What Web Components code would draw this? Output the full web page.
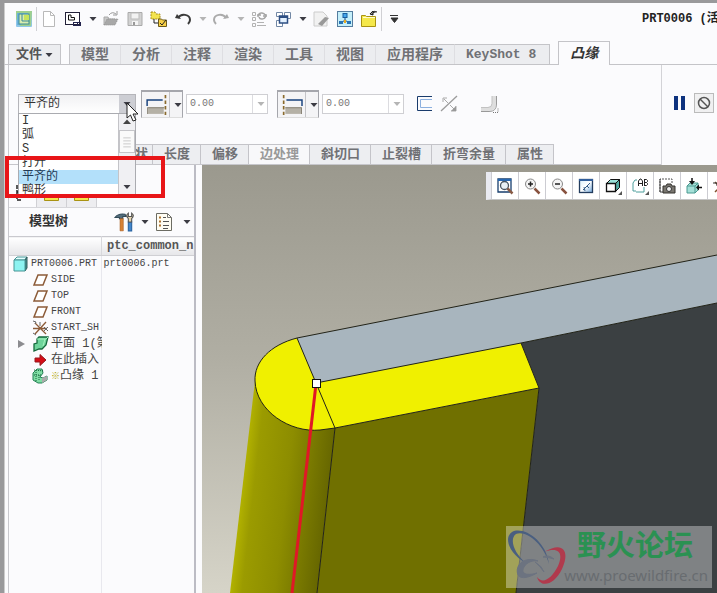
<!DOCTYPE html>
<html lang="zh-CN">
<head>
<meta charset="utf-8">
<title>PRT0006</title>
<style>
html, body { margin: 0; height: 100%; }
body { font-family: "Liberation Mono", "Noto Sans CJK SC", monospace; font-size: 12px; color: #444; overflow: hidden; }
</style>
</head>
<body>
<cad-window></cad-window>
<script>
const ICONS = {
  app: '<rect x="0" y="0" width="16" height="16" rx="1" fill="#8fc7ea"/><path d="M0 8V0h16l-1 15H4z" fill="#9ed08f"/><path d="M1 2h11v2H5v10H1z" fill="#6fb2dc"/><rect x="3" y="3" width="10" height="10" fill="#d9edb0" stroke="#3d8b96"/><path d="M6 3v7h7" fill="none" stroke="#3d8b96"/><rect x="8" y="4" width="5" height="5" fill="#c6e45a"/>',
  doc: '<path d="M2.500.5h7l4 4v11h-11z" fill="#fff" stroke="#b9b9b9"/><path d="M9.500.5v4h4" fill="none" stroke="#b9b9b9"/>',
  win: '<rect x=".5" y="1.500" width="14" height="12" fill="#fff" stroke="#222038"/><path d="M3.500 4v5h6v-2.500H6V4z" fill="#fff" stroke="#111"/><path d="M8 11.500h8M8 14.500h8M8.500 11v4M15.500 11v4M12.500 11v4" stroke="#23234d"/>',
  open: '<path d="M1 14V6h4l1 2h6v2" fill="#c9c9c9" stroke="#aaa"/><path d="M1 14l3-6h11l-3 6z" fill="#a8a8a8" stroke="#949494" stroke-dasharray="1 1"/><path d="M6 4q3-4 7-1M14 0v4h-4" fill="none" stroke="#999"/>',
  save: '<path d="M1 1.500h14v13H1z" fill="#d2d2d2" stroke="#aaa"/><rect x="4" y="2" width="8" height="6" fill="#f2f2f2" stroke="#bbb"/><rect x="5" y="10" width="6" height="4" fill="#f4f4f4"/><rect x="6" y="11" width="2" height="3" fill="#999"/>',
  tree: '<path d="M0 1h4l1 2h4v5H0z" fill="#f3e44f" stroke="#a78c16" stroke-dasharray="2 1"/><path d="M3 8v4h4" stroke="#222" fill="none"/><path d="M7.500 8h3l1 1h4v6.500h-8z" fill="#f7cf46" stroke="#6b5a1d"/><path d="M9 12l2 2 4-5" fill="none" stroke="#222"/>',
  undo: '<path d="M0 7l2-4 4 5z" fill="#3b3b3b"/><path d="M3 7c3-5 12-4 12 2 0 2-1 3-2 4" fill="none" stroke="#3b3b3b" stroke-width="2"/>',
  redo: '<path d="M16 7l-2-4-4 5z" fill="#ababab"/><path d="M13 7C10 2 1 3 1 9c0 2 1 3 2 4" fill="none" stroke="#ababab" stroke-width="2"/>',
  regen: '<path d="M1.500 1.500h3v3h-3zM1.500 6.500h3v3h-3zM1.500 12.500h3v3h-3zM6 14.500h9M6 11.500h7" fill="none" stroke="#b2b2b2"/><path d="M7 6c0-5 6-5 7-2M15 3c0 6-6 6-7 3M12 5h4M6 4h4" fill="none" stroke="#a5a5a5" stroke-width="1.500"/>',
  windows: '<path d="M1.500 1.500h6v4h-6zM9.500 1.500h6v6h-6zM1.500 9.500h6v6h-6z" fill="#fff" stroke="#7288a5"/><rect x="4.500" y="5" width="8" height="7" fill="#e3f1ff" stroke="#2d4e83" stroke-width="1.500"/><path d="M4 6h9" stroke="#2d4e83" stroke-width="2"/>',
  erase: '<path d="M1 1h9l4 4v10H1z" fill="#f1f1f1" stroke="#ccc"/><path d="M5 13l7-7 4 1-7 8z" fill="#999"/>',
  model: '<rect x=".5" y=".5" width="15" height="15" fill="#c5effa" stroke="#557d9f"/><rect x="6" y="2.500" width="4" height="4" fill="#45a7ea" stroke="#165d9f"/><path d="M8 7v3M4 12l4-3 4 3" stroke="#1e4d85" fill="none"/><rect x="2" y="10" width="4" height="3" fill="#2974b4"/><rect x="10" y="10" width="4" height="3" fill="#2974b4"/><rect x="7" y="9" width="2" height="3" fill="#e6aa23"/>',
  folder: '<path d="M.5 15.500V4.500h4l1 1h9v10z" fill="#f5e84b" stroke="#a99212"/><path d="M2 6.500h12" stroke="#fffbd0"/><path d="M9 3c2-3 5-3 7-2M9 3l3 1V0z" fill="#222" stroke="#222"/>',
  down: '<path d="M4.500 6h7L8 10z" fill="#3c3c44"/>',
  downlight: '<path d="M4.500 6h7L8 10z" fill="#b5b5b5"/>',
  up: '<path d="M4 10h8L8 5.500z" fill="#444"/>',
  custom: '<path d="M4 4.500h8M5 7h7l-3.500 4.500z" stroke="#333" fill="#333"/>',
  left: '<path d="M1 10V4.500h14" fill="none" stroke="#16407c" stroke-width="1.300"/><path d="M2 11h14v6H2z" fill="#b5b1a6"/><path d="M1.500 17v-5.500h15" fill="none" stroke="#8a8477"/><path d="M17.500 0v18" stroke="#8a6a2c" stroke-width="1.500" stroke-dasharray="3 2"/>',
  right: '<path d="M18 10V4.500H4" fill="none" stroke="#16407c" stroke-width="1.300"/><path d="M3 11h14v6H3z" fill="#b5b1a6"/><path d="M17.500 17v-5.500H3" fill="none" stroke="#8a8477"/><path d="M1.500 0v18" stroke="#8a6a2c" stroke-width="1.500" stroke-dasharray="3 2"/>',
  cbox: '<path d="M15 .5H.5v14H15" fill="none" stroke="#193b6c"/><path d="M15 3.500H3.500v8H15" fill="none" stroke="#8cb0df"/>',
  flip: '<path d="M0 15L16 0" stroke="#9b9b9b" stroke-width="1.300"/><path d="M2 6V2h4M3 3l4 4M15 10v5h-5M9 9l5 5" stroke="#aaa" fill="none"/><path d="M15 10v5h-5z" fill="#999"/>',
  bend: '<path d="M0 13h7q6 0 6-6V0" stroke="#dedede" stroke-width="4" fill="none"/><path d="M0 15.500h8q7.500 0 7.500-7.500V0" fill="none" stroke="#999"/><path d="M0 11.500h7q4 0 4-4V0" fill="none" stroke="#c2c2c2"/><path d="M12 16.500h5v-5" fill="none" stroke="#777" stroke-dasharray="1 1"/>',
  pause: '<path d="M2 1h4v14H2zM9 1h4v14H9z" fill="#0d327e"/>',
  stop: '<circle cx="8" cy="8" r="5.500" fill="none" stroke="#555" stroke-width="1.500"/><path d="M4 4l8 8" stroke="#555" stroke-width="1.500"/>',
  zoomfit: '<path d="M1 1h13v13H1z" fill="#fff" stroke="#173e6e" stroke-width="1.300"/><path d="M1 2h13" stroke="#2768b2" stroke-width="2"/><circle cx="7.500" cy="7.500" r="4" fill="#e8f1f5" stroke="#495661" stroke-width="1.300"/><path d="M10.500 10.500l5 5" stroke="#885b46" stroke-width="2.500"/>',
  zoomin: '<circle cx="6.500" cy="6" r="5" fill="#f4f4f4" stroke="#888"/><path d="M4 6h5M6.500 3.500v5" stroke="#222" stroke-width="1.500"/><path d="M10.500 10.500l5 5" stroke="#88523f" stroke-width="2.500"/>',
  zoomout: '<circle cx="6.500" cy="6" r="5" fill="#f4f4f4" stroke="#888"/><path d="M4 6h5" stroke="#222" stroke-width="1.500"/><path d="M10.500 10.500l5 5" stroke="#88523f" stroke-width="2.500"/>',
  repaint: '<defs><linearGradient id="rp" x2="1" y2="1"><stop stop-color="#d8effc"/><stop offset=".5" stop-color="#fff"/><stop offset="1" stop-color="#6fa5d9"/></linearGradient></defs><rect x="1.500" y="1.500" width="13" height="13" fill="url(#rp)" stroke="#233c5e" stroke-width="1.300"/><path d="M1 2h14" stroke="#315e9b" stroke-width="2"/><path d="M5 12l7-7M6 9l1 4M9 8l2 2" stroke="#345c88"/>',
  cube: '<path d="M1.500 5.500l4-4h9l-4 4z" fill="#9be3da" stroke="#111"/><path d="M10.500 5.500l4-4v8l-4 4z" fill="#51aca2" stroke="#111"/><path d="M1.500 5.500h9v8h-9z" fill="#fff" stroke="#111" stroke-width="1.300"/><path d="M17 17h-4l4-4z" fill="#555"/>',
  annot: '<path d="M5 2h-2l-2 3v8h3M4 14h8V9" fill="none" stroke="#4d9e9c"/><path d="M6.500 8V3l1.500-2h1l1.500 2v5M6.500 5.500h4M12.500 1v7M12.500 1.500h2l1 1v1l-1 1h-2M14.500 4.500l1 1v1l-1 1h-2" fill="none" stroke="#222"/><path d="M17 17h-4l4-4z" fill="#555"/>',
  camera: '<path d="M1 14V1h12v5" fill="#fff" stroke="#555" stroke-dasharray="2 1"/><path d="M1 1v13h3" fill="none" stroke="#444"/><path d="M4 8h3l1-2h4l1 2h3v7H4z" fill="#79766f" stroke="#34332f"/><circle cx="10" cy="11" r="2.500" fill="#eee" stroke="#333"/>',
  section: '<path d="M1 8l3-3h8v7l-3 3H1z" fill="#a5e0d8" stroke="#4a9a91"/><path d="M1 8h8v7M9 8l3-3" fill="none" stroke="#4a9a91"/><path d="M6 0v4M16 9.500h-3" stroke="#111" stroke-width="1.500"/><path d="M3 3h6L6 7zM13 6.500v6l-3-3z" fill="#111"/>',
  datum: '<path d="M2 4l10 10M2 14l5-5" stroke="#80502c" stroke-width="1.500"/><path d="M0 5h4v3" fill="none" stroke="#333"/>',
  tools: '<path d="M0 5q3-4 9-3l1 2H7v2H4V5z" fill="#536d7c" stroke="#324b59"/><path d="M4.500 6h3v11h-3z" fill="#d78134" stroke="#a8622a" stroke-width=".5"/><path d="M12 9h3v8h-3z" fill="#4386cb" stroke="#2964a2"/><path d="M12 9V6q-3-3 0-5v3h3V1q3 2 0 5v3z" fill="#e5d5b0" stroke="#555"/>',
  list: '<path d="M.5 .5h11l4 4v13H.5z" fill="#fffdf3" stroke="#6c6c63"/><path d="M11.500 .5v4h4" fill="none" stroke="#777"/><path d="M3 4.500h2M3 8.500h2M3 12.500h2" stroke="#b0722c" stroke-width="2"/><path d="M7 4.500h3M7 8.500h6M7 12.500h6M7 15.500h5" stroke="#555"/>',
  part: '<path d="M2 4l3-3h10l-2 3z" fill="#e2ffff" stroke="#479494"/><path d="M13 4l2-3v11l-2 3z" fill="#439392" stroke="#335a5a"/><path d="M2 4h11v11H2z" fill="#8df3f1" stroke="#479494"/>',
  plane: '<path d="M6 3h9l-4 10H2z" fill="#fff" stroke="#8c5b38" stroke-width="1.500"/>',
  start: '<path d="M3 3l11 11M14 2L3 14M1 8.500h14" stroke="#8c5b38" stroke-width="1.300"/><path d="M1 1l3 1-1 2M8 2v4M12 7l4 4M12 11l4-4M1 13l3 2" stroke="#666" fill="none"/>',
  flat: '<path d="M5 3l2-2h9l-2 8-4 4H7l-5 2V8l3-1z" fill="#6ed49b" stroke="#14683c" stroke-width="1.300"/><path d="M5 3h9l2-2M13 3l-2 7" fill="none" stroke="#a4f3bf"/>',
  insert: '<path d="M3 6h5V2.500l6 5.500-6 5.500V10H3z" fill="#d50d16" stroke="#96191e"/>',
  flange: '<path d="M1 5l4-4h5l1 4-3 4 3 1 4-2v4l-5 3H6l-5-3z" fill="#7fdda4" stroke="#238154"/><path d="M10 10l5-2v4l-5 3z" fill="#aaa"/><path d="M2 2l10 1M4 4v10M7 7v6M2 7h7" stroke="#14633b" stroke-dasharray="1 1"/>',
  navtree: '<path d="M2 0v15h4M2 7h4" fill="none" stroke="#222" stroke-width="1.500" stroke-dasharray="4 1"/>',
  grip: '<path d="M3 2.500h10M3 6.500h10M3 10.500h10M3 14.500h10" stroke="#bbb"/>',
};

class UiIcon extends HTMLElement {
  connectedCallback() {
    const s = Number(this.getAttribute('size')) || 16;
    const b = s > 16 ? 18 : 16;
    this.attachShadow({ mode: 'open' }).innerHTML =
      `<style>:host{display:inline-flex;flex:none}svg{display:block;overflow:visible}</style>
       <svg width="${s}" height="${s}" viewBox="0 0 ${b} ${b}" aria-hidden="true">${ICONS[this.getAttribute('name')]}</svg>`;
  }
}
customElements.define('ui-icon', UiIcon);

class ToolButton extends HTMLElement {
  connectedCallback() {
    const n = this.getAttribute('icon');
    this.attachShadow({ mode: 'open' }).innerHTML = `
      <style>
      :host{display:flex;flex:none;width:var(--tool-width,24px);height:var(--tool-height,24px)}
      :host([narrow]){width:14px}
      :host([framed]){background:#f0f0f1;border:1px solid #bbb;box-sizing:border-box}
      button{all:unset;flex:1;display:flex;align-items:center;justify-content:center}
      </style>
      <button type="button" aria-label="${this.getAttribute('label') || n}"><ui-icon name="${n}" size="${this.getAttribute('size') || 16}"></ui-icon></button>`;
  }
}
customElements.define('tool-button', ToolButton);

class QuickBar extends HTMLElement {
  connectedCallback() {
    const items = ['app', '|', 'doc', 'win', 'down', 'open', 'save', 'tree', 'undo', 'downlight', 'redo', 'downlight', 'regen', 'windows', 'down', 'erase', 'model', 'folder', '|', 'custom'];
    this.attachShadow({ mode: 'open' }).innerHTML = `
      <style>
      :host{display:flex;align-items:center;height:32px;padding-left:8px;overflow:hidden}
      hr{flex:none;width:1px;height:24px;margin:0;border:0;background:#d0d0d4}
      h1{margin:0 0 0 236px;font-size:12px;line-height:24px;color:#222;white-space:pre}
      </style>
      ${items.map(i => i === '|' ? '<hr>' : `<tool-button icon="${i}" ${i.startsWith('down') ? 'narrow' : ''}></tool-button>`).join('')}
      <h1>PRT0006 (活</h1>`;
  }
}
customElements.define('quick-bar', QuickBar);

class RibbonTabs extends HTMLElement {
  connectedCallback() {
    const tabs = ['模型', '分析', '注释', '渲染', '工具', '视图', '应用程序', 'KeyShot 8'];
    this.attachShadow({ mode: 'open' }).innerHTML = `
      <style>
      :host{display:flex;align-items:flex-end;height:27px;padding-left:4px;border-bottom:1px solid #c4c4c8}
      button{all:unset;box-sizing:border-box;height:20px;line-height:18px;font-size:14px;font-weight:bold;color:#707175;white-space:nowrap;background:#ecedf0;border:1px solid #c4c4c8;border-bottom:0;display:flex;align-items:center}
      .file{width:53px;padding-left:7px;margin-right:8px;font-size:13px;color:#555}
      .file ui-icon{margin-left:-1px}
      .set{display:flex;border-right:1px solid #c4c4c8}
      .set button{padding:0 11px;border-left-color:#dedee2;border-right:0}
      .set button:first-child{border-left-color:#c4c4c8}
      .set button:last-child{font-size:13px;padding:0 13px 0 11px}
      .on{height:24px;width:52px;margin:0 0 -1px 8px;justify-content:center;font-style:italic;color:#333;background:#fbfbfd}
      </style>
      <button class="file">文件<ui-icon name="down"></ui-icon></button>
      <div class="set">${tabs.map(t => `<button>${t}</button>`).join('')}</div>
      <button class="on">凸缘</button>`;
  }
}
customElements.define('ribbon-tabs', RibbonTabs);

class ShapePicker extends HTMLElement {
  connectedCallback() {
    const opts = ['I', '弧', 'S', '打开', '平齐的', '鸭形'];
    this.attachShadow({ mode: 'open' }).innerHTML = `
      <style>
      :host{display:block;position:relative;flex:none;width:118px;height:20px}
      .box{display:flex;height:100%;box-sizing:border-box;border:1px solid #b5b5ba;background:linear-gradient(#f1f1f3,#fff)}
      select{all:unset;flex:1;min-width:0;padding-left:5px;font-size:12px;line-height:18px;color:#333}
      .box tool-button{--tool-width:16px;--tool-height:18px;background:#cdced4}
      .pop{position:absolute;z-index:2;left:0;right:0;top:19px;height:83px;box-sizing:border-box;display:flex;background:#fff;border:1px solid #aaabb0;overflow:hidden}
      ul{list-style:none;margin:0;padding:0;flex:1}
      li{height:14px;line-height:14px;padding-left:3px;font-size:12px;color:#333;white-space:nowrap}
      li[aria-selected]{background:#b3e0fa;color:#223a55}
      .bar{width:16px;border-left:1px solid #c4c4c8;display:flex;flex-direction:column;background:#f0f0f3}
      .bar tool-button{--tool-width:16px;--tool-height:16px}
      .thumb{flex:1;margin:0 0 26px;border:1px solid #c5c5c9;background:#fafafa;display:flex;align-items:center;justify-content:center}
      .cursor{position:absolute;z-index:4;left:108px;top:8px}
      </style>
      <div class="box"><select aria-label="形状"><option>平齐的</option></select><tool-button icon="down"></tool-button></div>
      <div class="pop"><ul role="listbox" aria-label="形状">${opts.map(o => `<li role="option" ${o === '平齐的' ? 'aria-selected="true"' : ''}>${o}</li>`).join('')}</ul>
      <div class="bar"><tool-button icon="up"></tool-button><div class="thumb"><ui-icon name="grip" size="12"></ui-icon></div><tool-button icon="down"></tool-button></div></div>
      <svg class="cursor" width="13" height="20" viewBox="0 0 13 20"><path d="M1 1v15l3.500-3 2.500 6 3-1-3-6h5z" fill="#fff" stroke="#222"/></svg>`;
  }
}
customElements.define('shape-picker', ShapePicker);

class OffsetField extends HTMLElement {
  connectedCallback() {
    this.attachShadow({ mode: 'open' }).innerHTML = `
      <style>
      :host{display:flex;flex:none;align-items:center;gap:3px}
      .split{display:flex;width:42px;height:28px;box-sizing:border-box;border:1px solid #a5a6ac;border-top-width:2px;border-bottom-color:#ddd;background:#f4f4f6}
      .split tool-button{--tool-width:27px;--tool-height:25px}
      .split tool-button[narrow]{width:13px;border-left:1px solid #c4c4c8;box-sizing:border-box}
      .num{display:flex;width:82px;height:20px;box-sizing:border-box;border:1px solid #cfcfd3;background:#fff}
      input{all:unset;flex:1;min-width:0;padding-left:3px;font-size:10px;line-height:18px;color:#777}
      .num tool-button{--tool-height:18px;border-left:1px solid #dcdce0}
      </style>
      <div class="split"><tool-button icon="${this.getAttribute('icon')}" size="20"></tool-button><tool-button icon="down" narrow></tool-button></div>
      <div class="num"><input aria-label="${this.getAttribute('icon')}" value="0.00"><tool-button icon="downlight" narrow></tool-button></div>`;
  }
}
customElements.define('offset-field', OffsetField);

class FlangeDashboard extends HTMLElement {
  connectedCallback() {
    const tabs = ['形状', '长度', '偏移', '边处理', '斜切口', '止裂槽', '折弯余量', '属性'];
    this.attachShadow({ mode: 'open' }).innerHTML = `
      <style>
      :host{display:flex;height:100px;margin-left:4px;border-left:1px solid #c9c9ce;box-sizing:border-box}
      .main{flex:1;min-width:0;display:flex;flex-direction:column;justify-content:space-between}
      .row{display:flex;align-items:center;padding:25px 0 0 9px;height:28px}
      .row>*{margin-right:9px}
      .row>shape-picker{margin-right:5px}
      .glyphs{display:flex;align-items:center}
      .glyphs tool-button:last-child{margin-left:16px}
      .tabs{display:flex;height:21px;padding-left:94px;border-bottom:1px solid #c6c6cb;box-sizing:border-box}
      .tabs button{all:unset;box-sizing:border-box;height:20px;line-height:19px;padding:0 10px 0 11px;font-size:13px;font-weight:bold;color:#707175;white-space:nowrap;background:#edeef1;border-left:1px solid #c4c4c9;border-top:1px solid #c4c4c9}
      .tabs button:first-child{padding:0 4px 0 18px}
      .tabs button:nth-child(4){color:#999;background:#f8f8fa}
      .tabs button:last-child{border-right:1px solid #c4c4c9}
      .end{flex:none;width:56px;border-left:1px solid #d3d3d7;display:flex;padding:28px 0 0 6px;box-sizing:border-box;gap:2px}
      .end tool-button{--tool-height:20px}
      .end tool-button[framed]{--tool-width:20px}
      </style>
      <div class="main">
        <div class="row"><shape-picker></shape-picker><offset-field icon="left"></offset-field><offset-field icon="right"></offset-field>
          <div class="glyphs"><tool-button icon="cbox"></tool-button><tool-button icon="flip"></tool-button><tool-button icon="bend"></tool-button></div></div>
        <div class="tabs">${tabs.map(t => `<button>${t}</button>`).join('')}</div>
      </div>
      <div class="end"><tool-button icon="pause"></tool-button><tool-button icon="stop" framed></tool-button></div>`;
  }
}
customElements.define('flange-dashboard', FlangeDashboard);

class ModelTree extends HTMLElement {
  connectedCallback() {
    const rows = [['part', 'PRT0006.PRT', 'en root', 'prt0006.prt'], ['plane', 'SIDE', 'en'], ['plane', 'TOP', 'en'], ['plane', 'FRONT', 'en'],
      ['start', 'START_SH', 'en'], ['flat', '平面 1(第', 'more'], ['insert', '在此插入', ''], ['flange', '<i>※</i>凸缘 1', '']];
    this.attachShadow({ mode: 'open' }).innerHTML = `
      <style>
      :host{display:flex;flex-direction:column;flex:none;width:188px;box-sizing:border-box;margin-left:4px;border-left:1px solid #c9c9ce;border-right:2px solid #bcbcc4}
      .nav{display:flex;height:43px;padding-top:14px;box-sizing:border-box;border-bottom:1px solid #d6d6da}
      .nav tool-button{--tool-width:29px;--tool-height:28px;border-right:1px solid #d0d0d4;background:#ededf0}
      .nav tool-button:first-child{--tool-width:27px;background:none;height:28px}
      header{display:flex;align-items:center;height:28px;padding-left:20px}
      h2{flex:1;margin:0;font-size:13px;line-height:20px;color:#333}
      header tool-button{--tool-width:20px}
      header tool-button[narrow]{width:20px}
      header tool-button:last-child{margin-left:2px;margin-right:-3px}
      .grid{flex:1;background:linear-gradient(#e8e8ee,#e8e8ee) 50% 0/1px 100% no-repeat}
      table{border-collapse:collapse;table-layout:fixed;width:100%;border-top:1px solid #c9c9ce}
      th,td{padding:0;overflow:hidden;white-space:nowrap;text-align:left}
      th{height:18px;line-height:18px;font-size:12px;color:#555;background:linear-gradient(#fff,#e6e6e9);border-bottom:1px solid #d0d0d4;padding-left:5px;box-sizing:border-box}
      th:first-child{border-right:1px solid #d8d8dc}
      td{height:16px;line-height:16px}
      td+td{padding-left:2px;font-size:10px}
      .cell{display:flex;align-items:center;gap:3px;height:16px;padding-left:23px}
      .root .cell{padding-left:3px}
      .more .cell{padding-left:9px;gap:0}
      .more .cell ui-icon+span{margin-left:3px}
      .more .cell::before{content:"";border-left:7px solid #8c8c90;border-top:4px solid transparent;border-bottom:4px solid transparent;margin-right:7px}
      .en{font-size:10px}
      i{font-style:normal;color:#b0a400;font-size:9px}
      </style>
      <div class="nav"><tool-button icon="navtree"></tool-button><tool-button icon="folder"></tool-button><tool-button icon="folder"></tool-button></div>
      <header><h2>模型树</h2><tool-button icon="tools" size="20"></tool-button><tool-button icon="down" narrow></tool-button><tool-button icon="list" size="18"></tool-button><tool-button icon="down" narrow></tool-button></header>
      <div class="grid"><table><colgroup><col style="width:50%"><col></colgroup><tr><th></th><th>ptc_common_n:</th></tr>
      ${rows.map(r => `<tr class="${r[2]}"><td><div class="cell"><ui-icon name="${r[0]}"></ui-icon><span>${r[1]}</span></div></td><td>${r[3] || ''}</td></tr>`).join('')}</table></div>`;
  }
}
customElements.define('model-tree', ModelTree);

class ModelView extends HTMLElement {
  connectedCallback() {
    const tools = ['zoomfit', 'zoomin', 'zoomout', 'repaint', 'cube', 'annot', 'camera', 'section', 'datum'];
    this.attachShadow({ mode: 'open' }).innerHTML = `
      <style>
      :host{display:block;position:relative;flex:1;min-width:0;margin-left:6px;overflow:hidden;background:linear-gradient(#9b998e,#b0aea3 45%,#d6d4c8)}
      .scene{position:absolute;inset:0;width:100%;height:100%}
      nav{position:absolute;top:7px;right:0;width:231px;height:28px;box-sizing:border-box;display:flex;overflow:hidden;background:#fff;border-left:5px solid #e9eaf1;border-bottom:1px solid #c5c5c5}
      nav tool-button{--tool-width:26px;--tool-height:27px;border-left:1px solid #ccccd2}
      .mark{position:absolute;right:5px;bottom:5px;width:206px;height:62px;background:rgba(255,255,255,.35);display:flex;flex-direction:column;align-items:flex-end;box-sizing:border-box;padding:3px 4px 0 0}
      .mark svg{position:absolute;left:0;top:2px}
      .mark strong{font:bold 29px/34px "Liberation Sans","Noto Sans CJK SC",sans-serif;color:#2b9152;padding-right:15px}
      .mark span{font:15px/24px "Noto Sans",sans-serif;color:#686c70}
      </style>
      <svg class="scene" viewBox="202 165 515 428" preserveAspectRatio="xMinYMin slice" role="img" aria-label="凸缘">
        <defs><linearGradient id="cyl" gradientUnits="userSpaceOnUse" x1="241" y1="500" x2="328" y2="510"><stop stop-color="#b1b100"/><stop offset=".13" stop-color="#9b9b00"/><stop offset=".5" stop-color="#8d8d00"/><stop offset="1" stop-color="#656500"/></linearGradient></defs>
        <path d="M521 343L717 303V593H516L539 388z" fill="#3b4042"/>
        <path d="M297 338L717 255V303L521 343 316 383z" fill="#a8b5be"/>
        <path d="M255 381L230 593H317L335 428z" fill="url(#cyl)"/>
        <path d="M335 428L539 388 516 593H317z" fill="#707000"/>
        <path d="M297 338C270 345 254 362 255 381C256 411 290 433 320 430L335 428 539 388 521 343 316 383z" fill="#f0f000"/>
        <path d="M717 255L297 338C270 345 254 362 255 381C256 411 290 433 320 430L335 428 539 388 521 343M297 338L335 428 317 593M316 383L521 343 717 303M539 388L516 593" fill="none" stroke="#222318"/>
        <path d="M316 384L292 593" stroke="#e01826" stroke-width="3"/>
        <rect x="312.500" y="379.500" width="8" height="8" fill="#fff" stroke="#111"/>
      </svg>
      <nav>${tools.map(t => `<tool-button icon="${t}"></tool-button>`).join('')}</nav>
      <div class="mark"><svg width="62" height="60" viewBox="0 0 62 60">
        <path d="M20 35C4 27-3 10 6 4C17-2 40 12 43 36C38 16 20 2 10 6C3 11 8 25 20 35z" fill="#4a5f80"/>
        <path d="M38 24C58 12 64 24 56 41C48 58 34 60 31 49C37 57 46 50 52 38C58 24 52 19 38 24z" fill="#b03a4d"/>
        <path d="M32 33C20 28 8 36 12 47C15 52 24 49 31 45C21 48 14 46 18 39C21 34 27 32 32 33zM29 34Q36 38 38 44Q34 38 29 34M37 29Q42 26 48 31Q42 29 37 29" fill="#6c7380" stroke="#6c7380"/></svg>
        <strong>野火论坛</strong><span>www.proewildfire.cn</span></div>`;
  }
}
customElements.define('model-view', ModelView);

class CadWindow extends HTMLElement {
  connectedCallback() {
    this.attachShadow({ mode: 'open' }).innerHTML = `
      <style>
      :host{display:flex;flex-direction:column;position:relative;height:100vh;box-sizing:border-box;background:#fbfbfd;border-top:3px solid #99999b;border-left:4px solid #99999b;box-shadow:inset 1px 0 #ccc;overflow:hidden}
      ribbon-tabs,quick-bar,flange-dashboard{flex:none}
      quick-bar+ribbon-tabs{margin-top:2px}
      flange-dashboard{position:relative;z-index:1}
      .work{flex:1;min-height:0;display:flex}
      .callout{position:absolute;z-index:3;left:1px;top:153px;width:160px;height:42px;box-sizing:border-box;border:4px solid #e81518}
      </style>
      <quick-bar></quick-bar><ribbon-tabs></ribbon-tabs><flange-dashboard></flange-dashboard>
      <div class="work"><model-tree></model-tree><model-view></model-view></div>
      <div class="callout"></div>`;
  }
}
customElements.define('cad-window', CadWindow);
</script>
</body>
</html>
